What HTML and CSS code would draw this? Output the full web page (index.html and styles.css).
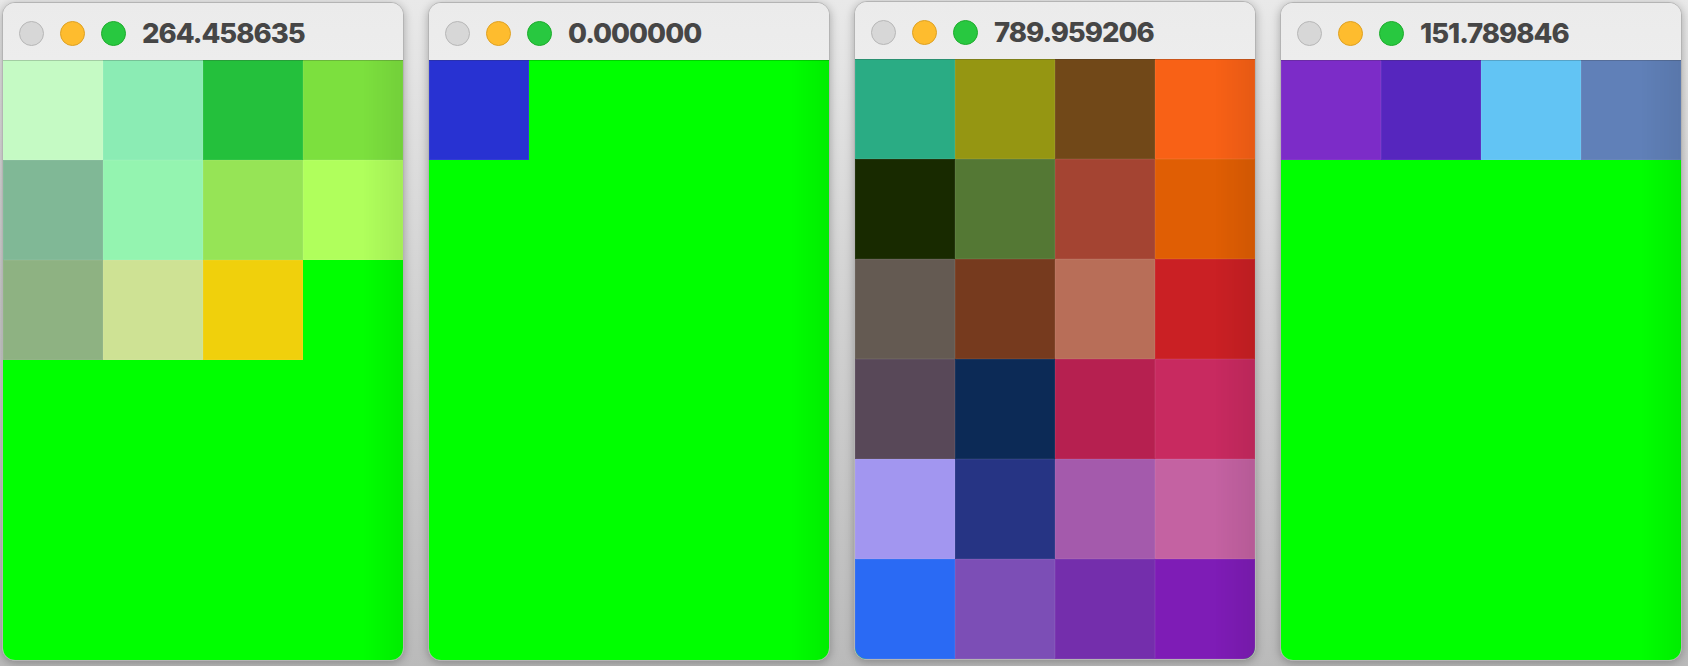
FILE: index.html
```html
<!DOCTYPE html>
<html lang="es">
<head>
  <meta charset="UTF-8" />
  <title>Ventanas de colores</title>
  <link rel="stylesheet" href="styles.css">
</head>
<body>
  <div class="escritorio" id="escritorio">
    <!-- Las ventanas se generan con JavaScript -->
  </div>

  <script>
    // Cada ventana: titulo y colores de las celdas (4 por fila)
    const ventanas = [
      { titulo: "264.458635", celdas: [
        "#c5fac4", "#8becb4", "#24c03c", "#7ce03e",
        "#80b896", "#94f4b0", "#96e456", "#b0ff5c",
        "#8eb282", "#cee294", "#f0d00c"
      ]},
      { titulo: "0.000000", celdas: ["#2832d2"] },
      { titulo: "789.959206", celdas: [
        "#2aac84", "#959612", "#714818", "#f86116",
        "#182a00", "#547834", "#a44432", "#e05e04",
        "#645a52", "#763a1e", "#b86e58", "#ca2024",
        "#584858", "#0c2a56", "#b62050", "#c82a60",
        "#a296f0", "#263484", "#a45aac", "#c462a2",
        "#2a6af4", "#7c4eb6", "#742eac", "#7e1cb6"
      ]},
      { titulo: "151.789846", celdas: ["#7c2cc8", "#5626be", "#62c4f4", "#6080b8"] }
    ];

    const escritorio = document.getElementById('escritorio');

    ventanas.forEach((v, i) => {
      const ventana = document.createElement('div');
      ventana.className = 'ventana' + (i === 2 ? ' alta' : '');
      ventana.innerHTML = `
        <div class="barra">
          <span class="luz gris"></span>
          <span class="luz amarilla"></span>
          <span class="luz verde"></span>
          <span class="titulo">${v.titulo}</span>
        </div>
        <div class="lienzo"></div>`;
      const lienzo = ventana.querySelector('.lienzo');
      v.celdas.forEach(color => {
        const celda = document.createElement('div');
        celda.className = 'celda';
        celda.style.background = color;
        lienzo.appendChild(celda);
      });
      escritorio.appendChild(ventana);
    });
  </script>
</body>
</html>
```

FILE: styles.css
```css
html, body { margin: 0; height: 100%; }
body { background: linear-gradient(#e9e9e9, #d2d2d2 45%, #bababa); font-family: Inter, "Liberation Sans", sans-serif; overflow: hidden; }
.escritorio { display: flex; gap: 24px; padding: 2px 0 0 2px; align-items: flex-start; }
.ventana { position: relative; width: 400px; border: 1px solid #b4b4b4; border-radius: 13px; overflow: hidden; background: #ececec; box-shadow: 0 2px 10px rgba(0,0,0,0.28); }
.ventana.alta { margin-top: -1px; }
.barra { height: 57px; display: flex; align-items: center; gap: 16px; padding: 0 16px; box-sizing: border-box; background: linear-gradient(#ebebeb, #ededed); }
.luz { width: 23px; height: 23px; border-radius: 50%; border: 1px solid; flex: none; margin-top: 3px; }
.luz.gris { background: #d7d7d7; border-color: #b7b7b7; }
.luz.amarilla { background: #febc2e; border-color: #dea123; }
.luz.verde { background: #28c840; border-color: #1eac2d; }
.titulo { margin-left: 0; margin-top: 2px; font-size: 27.5px; font-weight: 800; color: #464646; letter-spacing: -1px; }
.lienzo { display: grid; grid-template-columns: repeat(4, 100px); grid-auto-rows: 100px; align-content: start; height: 600px; background: #00ff00; }
.celda { box-shadow: inset 0 0 0 1px rgba(255,255,255,0.05); }
.ventana::after { content: ""; position: absolute; left: 0; right: 0; top: 57px; bottom: 0; pointer-events: none; border-top: 1px solid rgba(0,0,0,0.18); background: linear-gradient(to right, transparent 90%, rgba(0,0,0,0.07)); border-radius: 0 0 12px 12px; }
```
